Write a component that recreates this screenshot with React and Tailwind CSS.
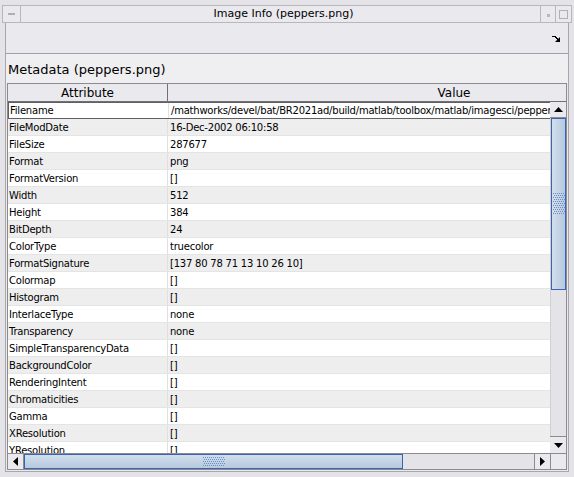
import React from 'react';

const rows = [
  ['Filename', '/mathworks/devel/bat/BR2021ad/build/matlab/toolbox/matlab/imagesci/peppers.png'],
  ['FileModDate', '16-Dec-2002 06:10:58'],
  ['FileSize', '287677'],
  ['Format', 'png'],
  ['FormatVersion', '[]'],
  ['Width', '512'],
  ['Height', '384'],
  ['BitDepth', '24'],
  ['ColorType', 'truecolor'],
  ['FormatSignature', '[137 80 78 71 13 10 26 10]'],
  ['Colormap', '[]'],
  ['Histogram', '[]'],
  ['InterlaceType', 'none'],
  ['Transparency', 'none'],
  ['SimpleTransparencyData', '[]'],
  ['BackgroundColor', '[]'],
  ['RenderingIntent', '[]'],
  ['Chromaticities', '[]'],
  ['Gamma', '[]'],
  ['XResolution', '[]'],
  ['YResolution', '[]'],
];

const Grip = ({ vertical }) => (
  <svg width={vertical ? 12 : 22} height={vertical ? 22 : 10} className="block">
    {Array.from({ length: vertical ? 66 : 55 }).map((_, i) => {
      const cols = vertical ? 6 : 11;
      const cx = (i % cols) * 2 + ((Math.floor(i / cols) % 2) ? 1 : 0);
      const cy = Math.floor(i / cols) * 2;
      return <rect key={i} x={cx} y={cy} width="1" height="1" fill="#6b8ec4" />;
    })}
  </svg>
);

export default function App() {
  return (
    <div
      className="w-[574px] h-[477px] bg-[#e4e4e8] overflow-hidden flex flex-col text-black"
      style={{ fontFamily: '"DejaVu Sans", Verdana, sans-serif' }}
    >
      {/* title bar */}
      <div className="mt-[5px] mx-[2px] h-[18px] shrink-0 flex border-y border-[#b8b8bc] bg-[#eae9ee]">
        <div className="w-[19px] border-x border-[#b8b8bc] flex items-center justify-center">
          <div className="w-[7px] h-[2px] bg-[#b0b0b4]" />
        </div>
        <div className="flex-1 flex items-center justify-center text-[11px] pl-[6px]">Image Info (peppers.png)</div>
        <div className="w-[16px] border-x border-[#b8b8bc] flex items-center justify-center">
          <div className="w-[3px] h-[3px] bg-[#b8b8bc] mt-[3px]" />
        </div>
        <div className="w-[16px] border-r border-[#b8b8bc] flex items-center justify-center">
          <div className="w-[9px] h-[9px] border border-[#b0b0b4]" />
        </div>
      </div>

      {/* window body */}
      <div className="flex-1 min-h-0 mx-[5px] mb-[5px] border-x border-b border-[#a8a8ac] bg-[#eae9ee] flex flex-col">
        <div className="h-[31px] shrink-0 flex items-center justify-end pr-[7px] border-b border-[#a0a0a4]">
          <svg width="9" height="8" viewBox="0 0 9 8" className="mt-[2px]">
            <path d="M0 1h3M3 1v1h1v1h1v1h1" stroke="#000" strokeWidth="1" fill="none" shapeRendering="crispEdges" />
            <path d="M3 7h5V2z" fill="#000" />
          </svg>
        </div>
        <div className="h-[29px] shrink-0 flex items-center pl-[2px] pt-[2px] text-[13px] bg-[#efeff1]">Metadata (peppers.png)</div>

        {/* table */}
        <div className="flex-1 min-h-0 mx-[1px] mb-[1px] border border-[#8c8c90] flex flex-col bg-[#eae9ee] overflow-hidden">
          <div className="flex-1 flex min-h-0">
            <div className="flex-1 flex flex-col overflow-hidden min-w-0 min-h-0">
              <div className="h-[18px] flex shrink-0 text-[12px] border-b border-[#707074]">
                <div className="w-[160px] shrink-0 border-r border-[#707074] flex items-center justify-center">Attribute</div>
                <div className="w-[572px] shrink-0 flex items-center justify-center">Value</div>
              </div>
              <div className="flex-1 min-h-0 overflow-hidden text-[10px] tracking-[-0.22px]">
                {rows.map(([k, v], i) => (
                  <div
                    key={k}
                    className={`h-[17px] flex w-[732px] ${i % 2 ? 'bg-[#eeeeee]' : 'bg-white'} ${i === 0 ? 'border border-[#606064]' : 'border-b border-[#e4e4e4]'}`}
                  >
                    <div className="w-[160px] shrink-0 pl-[1px] flex items-center border-r border-[#e0e0e0] whitespace-nowrap">{k}</div>
                    <div className="flex-1 pl-[2px] flex items-center whitespace-nowrap">{v}</div>
                  </div>
                ))}
              </div>
            </div>
            <div className="w-[16px] shrink-0 flex flex-col">
              <div className="h-[18px] shrink-0 border-b border-[#707074]" />
              <div className="h-[16px] shrink-0 border-b border-[#8c8c90] bg-[#eae9ee] flex items-center justify-center">
                <svg width="9" height="5"><path d="M0 5L4.5 0L9 5z" fill="#000" /></svg>
              </div>
              <div className="flex-1 min-h-0 flex flex-col bg-[#e4e4e8] border-l border-[#d0d0d4]">
                <div className="h-[172px] border border-[#3a64b0] bg-gradient-to-r from-[#d2deec] to-[#b6c9df] flex items-center justify-center">
                  <Grip vertical />
                </div>
                <div className="flex-1" />
              </div>
              <div className="h-[17px] shrink-0 border-t border-[#8c8c90] bg-[#eae9ee] flex items-center justify-center">
                <svg width="9" height="5"><path d="M0 0L4.5 5L9 0z" fill="#000" /></svg>
              </div>
            </div>
          </div>
          <div className="h-[16px] shrink-0 flex border-t border-[#8c8c90]">
            <div className="w-[16px] border-r border-[#8c8c90] flex items-center justify-center">
              <svg width="5" height="9"><path d="M5 0L0 4.5L5 9z" fill="#000" /></svg>
            </div>
            <div className="flex-1 flex bg-[#e4e4e8]">
              <div className="w-[379px] border border-[#3a64b0] bg-gradient-to-b from-[#d2deec] to-[#b6c9df] flex items-center justify-center">
                <Grip />
              </div>
              <div className="flex-1" />
            </div>
            <div className="w-[16px] border-l border-[#8c8c90] flex items-center justify-center">
              <svg width="5" height="9"><path d="M0 0L5 4.5L0 9z" fill="#000" /></svg>
            </div>
            <div className="w-[16px] border-l border-[#8c8c90]" />
          </div>
        </div>
      </div>
    </div>
  );
}
